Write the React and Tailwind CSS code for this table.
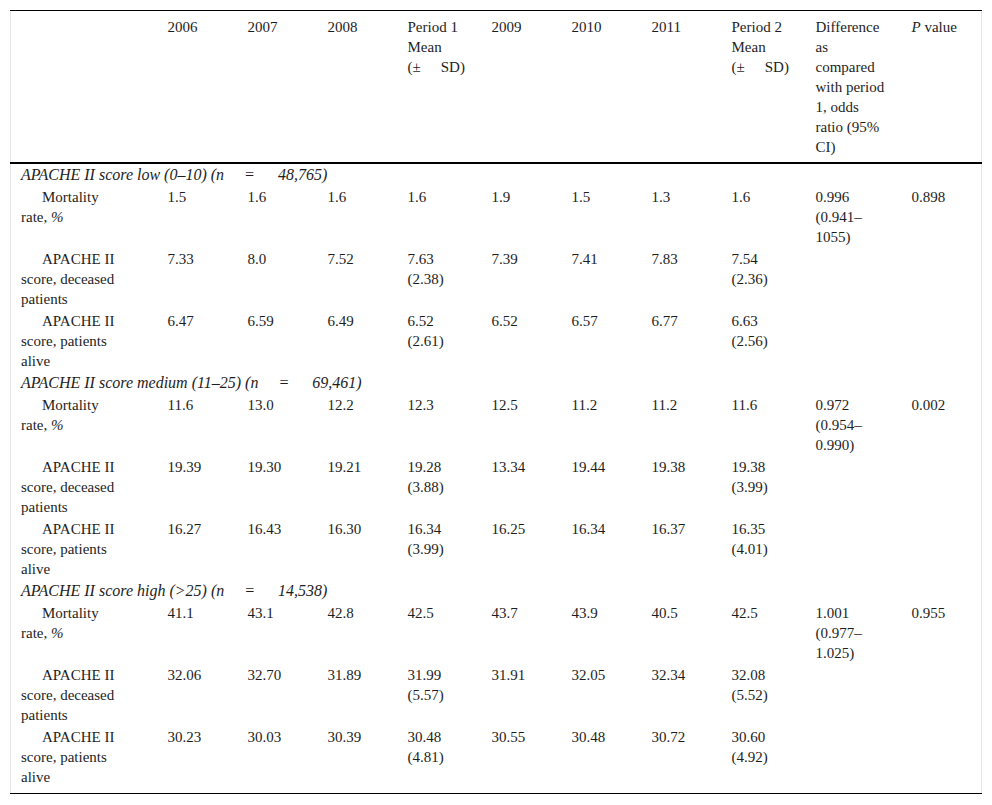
import React from "react";

const years1 = ["2006", "2007", "2008"];
const years2 = ["2009", "2010", "2011"];

const groups = [
  {
    title: "APACHE II score low (0–10) (n",
    n: "48,765",
    rows: [
      { label: "mort", vals: ["1.5", "1.6", "1.6", ["1.6"], "1.9", "1.5", "1.3", ["1.6"]], diff: ["0.996", "(0.941–", "1055)"], p: "0.898" },
      { label: "APACHE II|score, deceased|patients", vals: ["7.33", "8.0", "7.52", ["7.63", "(2.38)"], "7.39", "7.41", "7.83", ["7.54", "(2.36)"]] },
      { label: "APACHE II|score, patients|alive", vals: ["6.47", "6.59", "6.49", ["6.52", "(2.61)"], "6.52", "6.57", "6.77", ["6.63", "(2.56)"]] },
    ],
  },
  {
    title: "APACHE II score medium (11–25) (n",
    n: "69,461",
    rows: [
      { label: "mort", vals: ["11.6", "13.0", "12.2", ["12.3"], "12.5", "11.2", "11.2", ["11.6"]], diff: ["0.972", "(0.954–", "0.990)"], p: "0.002" },
      { label: "APACHE II|score, deceased|patients", vals: ["19.39", "19.30", "19.21", ["19.28", "(3.88)"], "13.34", "19.44", "19.38", ["19.38", "(3.99)"]] },
      { label: "APACHE II|score, patients|alive", vals: ["16.27", "16.43", "16.30", ["16.34", "(3.99)"], "16.25", "16.34", "16.37", ["16.35", "(4.01)"]] },
    ],
  },
  {
    title: "APACHE II score high (>25) (n",
    n: "14,538",
    rows: [
      { label: "mort", vals: ["41.1", "43.1", "42.8", ["42.5"], "43.7", "43.9", "40.5", ["42.5"]], diff: ["1.001", "(0.977–", "1.025)"], p: "0.955" },
      { label: "APACHE II|score, deceased|patients", vals: ["32.06", "32.70", "31.89", ["31.99", "(5.57)"], "31.91", "32.05", "32.34", ["32.08", "(5.52)"]] },
      { label: "APACHE II|score, patients|alive", vals: ["30.23", "30.03", "30.39", ["30.48", "(4.81)"], "30.55", "30.48", "30.72", ["30.60", "(4.92)"]] },
    ],
  },
];

function Lines({ items }) {
  return items.map((t, i) => <div key={i}>{t}</div>);
}

function Label({ label }) {
  if (label === "mort") {
    return (
      <>
        <div className="pl-[21px]">Mortality</div>
        <div>
          rate, <i>%</i>
        </div>
      </>
    );
  }
  const parts = label.split("|");
  return (
    <>
      <div className="pl-[21px]">{parts[0]}</div>
      <div>{parts[1]}</div>
      <div>{parts[2]}</div>
    </>
  );
}

function PeriodHead({ n }) {
  return (
    <>
      <div>Period {n}</div>
      <div>Mean</div>
      <div>
        (±<span className="inline-block w-[20px]" />
        SD)
      </div>
    </>
  );
}

export default function App() {
  const th = "border-t border-t-black pt-[6px] pb-[5px] pl-[10px] pr-1 text-left align-top font-normal";
  const td = "py-px pl-[10px] pr-1 align-top";
  return (
    <div className="bg-white pt-[10px] pl-[10px] min-h-[805px] font-['Liberation_Serif','Times_New_Roman',serif]">
      <table className="table-fixed border-collapse w-[971px] text-[15px] leading-[20px] text-[#1e1e1e] border-x border-x-[#e5e5e5]">
        <colgroup>
          <col className="w-[147px]" />
          <col className="w-[80px]" />
          <col className="w-[80px]" />
          <col className="w-[80px]" />
          <col className="w-[84px]" />
          <col className="w-[80px]" />
          <col className="w-[80px]" />
          <col className="w-[80px]" />
          <col className="w-[84px]" />
          <col className="w-[96px]" />
          <col className="w-[80px]" />
        </colgroup>
        <thead>
          <tr className="border-b-2 border-b-black">
            <th className={th}></th>
            {years1.map((y) => (
              <th key={y} className={th}>{y}</th>
            ))}
            <th className={th}>
              <PeriodHead n="1" />
            </th>
            {years2.map((y) => (
              <th key={y} className={th}>{y}</th>
            ))}
            <th className={th}>
              <PeriodHead n="2" />
            </th>
            <th className={th}>
              <Lines items={["Difference", "as", "compared", "with period", "1, odds", "ratio (95%", "CI)"]} />
            </th>
            <th className={th}>
              <i>P</i> value
            </th>
          </tr>
        </thead>
        <tbody>
          {groups.map((g, gi) => (
            <React.Fragment key={gi}>
              <tr>
                <td colSpan={11} className="py-px pl-[10px] italic text-[16px]">
                  {g.title}
                  <span className="inline-block w-[20px]" />=<span className="inline-block w-[23px]" />
                  {g.n})
                </td>
              </tr>
              {g.rows.map((r, ri) => {
                const last = gi === groups.length - 1 && ri === g.rows.length - 1;
                const cls = last ? td + " pb-[6px]" : td;
                return (
                  <tr key={ri} className={last ? "border-b border-b-black" : ""}>
                    <td className={cls}>
                      <Label label={r.label} />
                    </td>
                    {r.vals.map((v, vi) => (
                      <td key={vi} className={cls}>
                        {Array.isArray(v) ? <Lines items={v} /> : v}
                      </td>
                    ))}
                    <td className={cls}>{r.diff ? <Lines items={r.diff} /> : null}</td>
                    <td className={cls}>{r.p || null}</td>
                  </tr>
                );
              })}
            </React.Fragment>
          ))}
        </tbody>
      </table>
    </div>
  );
}
